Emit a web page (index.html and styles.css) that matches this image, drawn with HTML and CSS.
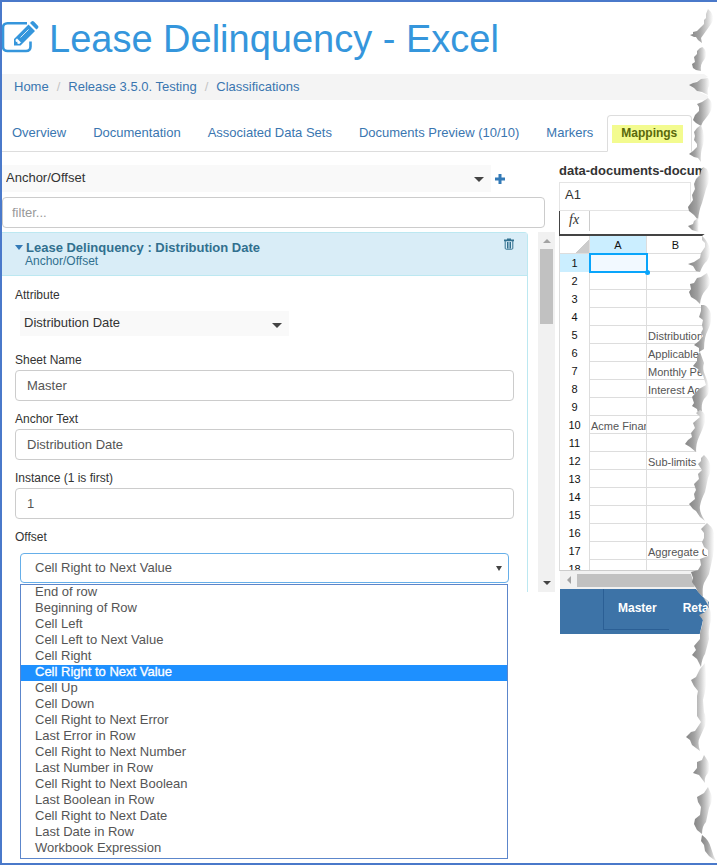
FILE: index.html
```html
<!DOCTYPE html>
<html lang="en">
<head>
<meta charset="utf-8">
<meta name="viewport" content="width=device-width, initial-scale=1">
<title>Lease Delinquency - Excel</title>
<link rel="stylesheet" href="styles.css">
</head>
<body>
<div class="page">
  <h1 class="title">
    <svg class="title-icon" viewBox="0 0 37 32" aria-hidden="true">
      <path d="M25 2.300H5.500Q1 2.300 1 6.800V25.500Q1 30 5.500 30H24Q28.500 30 28.500 25.500V20.500" fill="none" stroke="currentColor" stroke-width="2.600"/>
      <path d="M12 18 26.500 3.500l6.500 6.500L18.500 24.500H12zM28 2l1.500-1.500q1.300-.9 2.600.3l3.800 4q1 1.200 0 2.400L34.400 8.600z" fill="currentColor"/>
      <path d="M14 18.800v1.600h1.800v2h1.700l1-1-3.500-3.600zM18.500 16.500l8-8" fill="#fff" stroke="#fff" stroke-width=".8"/>
    </svg>
    <span>Lease Delinquency - Excel</span>
  </h1>

  <nav class="breadcrumb" aria-label="Breadcrumb">
    <a href="#">Home</a><span class="slash">/</span><a href="#">Release 3.5.0. Testing</a><span class="slash">/</span><a href="#">Classifications</a>
  </nav>

  <nav class="tabs" aria-label="Sections">
    <a href="#">Overview</a>
    <a href="#">Documentation</a>
    <a href="#">Associated Data Sets</a>
    <a href="#">Documents Preview (10/10)</a>
    <a href="#">Markers</a>
    <a href="#" class="active" aria-current="page"><mark>Mappings</mark></a>
  </nav>

  <main class="columns">
    <section class="left">
      <div class="add-row">
        <div class="flat-select">
          <select aria-label="Mapping type"><option>Anchor/Offset</option></select>
        </div>
        <button class="add" type="button" aria-label="Add mapping">
          <svg viewBox="0 0 10 10"><path d="M3.500 0h3v3.500H10v3H6.500V10h-3V6.500H0v-3h3.500z" fill="currentColor"/></svg>
        </button>
      </div>
      <input class="control filter" type="text" placeholder="filter..." aria-label="Filter mappings">

      <div class="list">
        <article class="panel">
          <header class="panel-head">
            <div>
              <h2><span class="caret"></span>Lease Delinquency : Distribution Date</h2>
              <p>Anchor/Offset</p>
            </div>
            <button class="trash" type="button" aria-label="Delete mapping">
              <svg viewBox="0 0 10 12"><path d="M0 1.500h3V.5h4v1h3v1.700H0z" fill="currentColor"/><path d="M1.200 3v7.200q0 1 1 1h5.600q1 0 1-1V3M3.500 4v6.500M5 4v6.500M6.500 4v6.500" fill="none" stroke="currentColor"/></svg>
            </button>
          </header>
          <form class="fields">
            <label for="attribute">Attribute</label>
            <div class="flat-select attribute">
              <select id="attribute"><option>Distribution Date</option></select>
            </div>
            <label for="sheet">Sheet Name</label>
            <input class="control" id="sheet" type="text" value="Master">
            <label for="anchor">Anchor Text</label>
            <input class="control" id="anchor" type="text" value="Distribution Date">
            <label for="instance">Instance (1 is first)</label>
            <input class="control" id="instance" type="text" value="1">
            <label for="offset">Offset</label>
            <div class="offset">
              <select class="control" id="offset"><option>Cell Right to Next Value</option></select>
              <ul class="menu" role="listbox" aria-label="Offset">
                <li role="option">End of row</li>
                <li role="option">Beginning of Row</li>
                <li role="option">Cell Left</li>
                <li role="option">Cell Left to Next Value</li>
                <li role="option">Cell Right</li>
                <li role="option" aria-selected="true" class="selected">Cell Right to Next Value</li>
                <li role="option">Cell Up</li>
                <li role="option">Cell Down</li>
                <li role="option">Cell Right to Next Error</li>
                <li role="option">Last Error in Row</li>
                <li role="option">Cell Right to Next Number</li>
                <li role="option">Last Number in Row</li>
                <li role="option">Cell Right to Next Boolean</li>
                <li role="option">Last Boolean in Row</li>
                <li role="option">Cell Right to Next Date</li>
                <li role="option">Last Date in Row</li>
                <li role="option">Workbook Expression</li>
              </ul>
            </div>
          </form>
        </article>
        <div class="vbar" aria-hidden="true"><i class="up"></i><i class="thumb"></i><i class="down"></i></div>
      </div>
    </section>

    <section class="right">
      <h3>data-documents-docum</h3>
      <div class="cell-name">A1</div>
      <div class="formula"><span class="fx">fx</span></div>
      <div class="grid">
        <table>
          <colgroup><col class="c-num"><col class="c-a"><col></colgroup>
          <thead><tr><th class="corner"></th><th class="on" scope="col">A</th><th class="b" scope="col">B</th></tr></thead>
          <tbody>
            <tr><th class="on">1</th><td class="cursor"></td><td></td></tr>
            <tr><th>2</th><td></td><td></td></tr>
            <tr><th>3</th><td></td><td></td></tr>
            <tr><th>4</th><td></td><td></td></tr>
            <tr><th>5</th><td></td><td>Distribution</td></tr>
            <tr><th>6</th><td></td><td>Applicable R</td></tr>
            <tr><th>7</th><td></td><td>Monthly Pe</td></tr>
            <tr><th>8</th><td></td><td>Interest Acc</td></tr>
            <tr><th>9</th><td></td><td></td></tr>
            <tr><th>10</th><td>Acme Financ</td><td></td></tr>
            <tr><th>11</th><td></td><td></td></tr>
            <tr><th>12</th><td></td><td>Sub-limits</td></tr>
            <tr><th>13</th><td></td><td></td></tr>
            <tr><th>14</th><td></td><td></td></tr>
            <tr><th>15</th><td></td><td></td></tr>
            <tr><th>16</th><td></td><td></td></tr>
            <tr><th>17</th><td></td><td>Aggregate C</td></tr>
            <tr><th>18</th><td></td><td></td></tr>
          </tbody>
        </table>
      </div>
      <div class="hbar" aria-hidden="true"><i class="prev"></i><i class="thumb"></i></div>
      <div class="sheets"><button type="button" class="current">Master</button><button type="button">Reta</button></div>
    </section>
  </main>

  <svg class="torn" viewBox="677 0 40 865" aria-hidden="true">
    <defs>
      <linearGradient id="shade"><stop offset="0" stop-color="#858585"/><stop offset=".4" stop-color="#a2a2a2"/><stop offset=".75" stop-color="#d4d4d4"/><stop offset="1" stop-color="#fff"/></linearGradient>
    </defs>
    <path fill="#fff" d="M697 0H717V862H715L707 855 702 845 704 835 701 833 694 822 701 807 697 798 708 787 704 783 694 773 697 763 704 755 700 753 686 737 693 733 702 722 697 717V700L691 681 705 663 700 667 693 655 700 633 703 620 701 616 709 612 709 602 703 597 695 588 691 574 700 569V560L707 556 703 548 705 540 701 530 706 525 703 520 689 508 695 490V480L702 470 698 463 703 455 697 452 685 444 692 435 693 425 700 417 695 412 699 411 692 405V397L705 388 704 372 699 367 698 360 702 352 700 345 701 340 702 333 703 325 702 317 703 308 700 303 690 297V285L707 273 700 272 688 264 698 259 706 248 702 236 706 233 699 232 688 226 698 218 688 209 695 190 697 182 703 180V164L701 162 689 155 697 146 694 140V132L701 126 693 120 699 110 697 104 708 98 708 96 697 91 689 85 699 80 708 77 700 71 692 67 694 56 697 50 704 47 702 43 690 35 697 31 704 24 706 14 708 9 697 2z"/>
    <g fill="url(#shade)">
      <path d="M708 9l-2 5v4l-2 2v4l-3 3-4 4-4 1v2l-3 1 4 2h2l2 3 4 3-1-5 5-7 5-7q3-4 2-8t-5-7z"/>
      <path d="M704 47l-4 1-3 3v3l-3 3 1 5-3 2 1 4 3 2 5 1q-1-7 3-11 3-4 2-8t-5-5z"/>
      <path d="M708 78l-7 1-4 3-4 1-4 2 5 3 3 3 5 1 6 3q-1-6 1-9t-1-8z"/>
      <path d="M708 98l-6 4-5 2 2 3v4l-4 4-2 5 3 3 5 3q2-5 5-8 5-6 6-11t-4-9z"/>
      <path d="M701 125l-4 3-3 4 1 4-1 4 3 4v3l-4 4-4 3 5 3 4 1 3 4q-1-9 2-17t-2-20z"/>
      <path d="M703 167l-2 4-1 4-4 4-2 5 1 5-3 6 1 5-5 7 1 4 5 4 4 5q1-10 4-17l4-14q6-12 1-20z"/>
      <path d="M698 218l-4 3-1 3-5 2 4 4 7 2q-1-5 0-8z"/>
      <path d="M702 236v4l3 3v4l-4 6-1 5-6 4-6 2 5 2 3 5 4 1q3-8 7-11 5-8 2-15t-7-10z"/>
      <path d="M707 273l-6 4-4 1-3 5-4 1 1 5-2 3 2 5 5 3 4 4q1-9 5-13 6-6 5-11z"/>
      <path d="M701 305v6l-2 6 4 3-1 5 1 4-2 4 2 3-4 5-5 4 5 3v4l5-3q0-12 4-19 6-12 2-19t-7-6z"/>
      <path d="M700 352l-3 4v5l-4 5 5 3 2 4 3 2 3 10-7 4-7 8 2 6-2 3 5 3 1 4 4-2q-1-7 2-12 6-5 5-11-1-7-4-13t-1-12z"/>
      <path d="M700 410l-4 3 4 4-7 6 2 5-4 5 1 4-4 3-3 4 5 3 6 5q0-9 3-15t6-15q2-9-5-12z"/>
      <path d="M704 455l-3 3v3l-3 3 4 6-4 4 1 5-5 5 2 6-2 4 1 5-6 5 4 5 3 2 4 6 5 4q-6-9-5-15t5-14l3-14q7-13-4-23z"/>
      <path d="M707 523l-6 6 3 4v5l-2 4 2 5 4 3v6l-8 3 1 6-3 5-7 2 2 6-1 4 4 6 2 4 5 5q-1-9 1-14l5-9q2-9 4-18t1-18q2-8-7-15z"/>
      <path d="M703 597l5 4 1 6-4 5-6 3 4 5-1 6-2 7v6l-6 7 2 4-4 5 5 4 4 8q1-9 4-13l4-15q-1-10 2-18t-8-24z"/>
      <path d="M705 663l-5 6-4 8-5 3 3 6 4 5-1 5v20l4 6-6 9-4 1-5 5 4 3 2 5 8 6q-3-9 0-14l5-11q2-8-1-14l-1-12q2-7 3-14t-1-23z"/>
      <path d="M704 755l-2 5-5 2v6l-4 5 6 2 6 8q-1-6 3-10 3-6 0-12z"/>
      <path d="M708 787l-4 6-7 4 1 5 3 5-1 8-5 4-1 5 3 6 5 4q0-8 4-12l3-14q4-8 3-12z"/>
      <path d="M702 835l-1 6 3 4 1 6 4 5 8 6q-4-6-6-14t-9-13z"/>
    </g>
  </svg>
</div>
</body>
</html>
```
FILE: styles.css
```css
* { box-sizing: border-box; }
body {
  margin: 0;
  background: #fff;
  color: #333;
  font: 13px/16px "Liberation Sans", Arial, sans-serif;
}
a { color: #3a76b0; text-decoration: none; }
h1, h2, h3, p, ul { margin: 0; padding: 0; }
button { border: 0; padding: 0; background: none; font: inherit; }
input, select { font: inherit; color: #555; }

.page {
  position: relative;
  min-height: 100vh;
  overflow: hidden;
  border: solid #4a79ca;
  border-width: 2px 0 2px 2px;
}
.title {
  display: flex;
  align-items: center;
  gap: 10px;
  height: 72px;
  padding-top: 2px;
  color: #3596dc;
  font-size: 38px;
  line-height: 44px;
  font-weight: 400;
  white-space: nowrap;
}
.title-icon { width: 37px; height: 32px; margin-top: -4px; flex: none; }

.breadcrumb { padding: 5px 12px; background: #f4f4f4; }
.slash { padding: 0 8px; color: #c4c4c4; }

.tabs {
  display: flex;
  align-items: flex-end;
  gap: 1px;
  height: 52px;
  border-bottom: 1px solid #ddd;
  white-space: nowrap;
}
.tabs a { padding: 10px 13px; }
.tabs a:first-child { padding-left: 10px; }
.tabs .active {
  margin-bottom: -1px;
  padding: 9px 8px 8px 4px;
  border: 1px solid #ddd;
  border-bottom-color: #fff;
  border-radius: 4px 4px 0 0;
  background: #fff;
}
mark { display: block; padding: 0 6px 2px 9px; background: #f3fb8f; color: #59690c; font-size: 12px; font-weight: 700; }

.columns { display: grid; grid-template-columns: minmax(0, 7fr) minmax(0, 2fr); gap: 4px; padding-top: 13px; }
.add-row { display: flex; align-items: center; gap: 4px; margin-right: 50px; }
.flat-select { position: relative; flex: 1; background: #f9f9f9; }
.flat-select::after {
  content: "";
  position: absolute;
  right: 7px;
  top: 12px;
  border: 5px solid transparent;
  border-top-color: #444;
  border-bottom: 0;
  pointer-events: none;
}
.flat-select select {
  appearance: none;
  display: block;
  width: 100%;
  height: 27px;
  padding: 0 4px 2px;
  border: 0;
  background: none;
  color: #333;
}
.add { width: 10px; height: 10px; color: #337ab7; }
.add svg, .trash svg { display: block; width: 10px; }
.control {
  display: block;
  width: 100%;
  height: 31px;
  padding: 0 11px;
  border: 1px solid #ccc;
  border-radius: 4px;
  background: #fff;
}
.filter { width: auto; min-width: calc(100% - 10px); margin: 5px 0 4px; padding: 0 9px; }
.filter::placeholder { color: #999; }

.list { display: flex; gap: 10px; }
.panel { flex: 1; min-width: 0; border: 1px solid #bce8f1; border-width: 1px 1px 0 0; border-radius: 0 4px 0 0; }
.panel-head {
  display: flex;
  justify-content: space-between;
  height: 43px;
  padding: 7px 13px;
  border-bottom: 1px solid #bce8f1;
  background: #d9edf7;
  color: #31708f;
}
.panel-head h2 { font-size: 13px; line-height: 15px; }
.panel-head p { padding-left: 10px; font-size: 12px; line-height: 12px; }
.caret { display: inline-block; margin-right: 3px; border: 4px solid transparent; border-top: 5px solid #337ab7; border-bottom: 0; vertical-align: 2px; }
.trash { width: 10px; height: 12px; margin-top: -2px; margin-right: 0; color: #31708f; }
.fields { padding: 11px 13px 9px; }
.fields label { display: block; margin-bottom: 2px; font-size: 12px; line-height: 16px; }
.fields .control { margin-bottom: 10px; }
.fields .attribute { width: 54%; margin: 8px 5px 16px; }
.attribute select { height: 25px; }
.fields .offset { position: relative; margin: 8px 5px 0; }
.fields .offset .control { appearance: none; height: 30px; margin: 0; padding: 0 14px; border-color: #66afe9; }
.offset::after {
  content: "";
  position: absolute;
  right: 7px;
  top: 13px;
  border: 3px solid transparent;
  border-top: 5px solid #444;
  border-bottom: 0;
}
.menu {
  position: absolute;
  top: 31px;
  left: 0;
  right: 1px;
  z-index: 2;
  border: 1px solid #5c86cb;
  background: #fff;
  color: #555;
  list-style: none;
}
.menu li { height: 16px; padding-left: 14px; line-height: 14px; }
.menu li:last-child { height: 17px; }
.menu .selected { background: #1e90ff; color: #fff; -webkit-text-stroke: 0.3px #fff; }

.vbar { display: flex; flex-direction: column; align-items: center; width: 17px; padding: 7px 0; background: #f1f1f1; }
.up, .down { border: 4px solid transparent; }
.up { border-top: 0; border-bottom-color: #a3a3a3; }
.down { margin-top: auto; border-bottom: 0; border-top-color: #444; }
.vbar .thumb { width: 13px; height: 75px; margin-top: 6px; background: #c1c1c1; }

.right h3 { overflow: hidden; margin-top: -3px; padding-bottom: 3px; color: #333; font-size: 13px; line-height: 17px; white-space: nowrap; }
.cell-name { height: 29px; margin-right: 26px; padding: 4px 5px; border: 1px solid #e4e4e4; }
.formula { height: 25px; border: solid #444; border-width: 0 0 2px 1px; }
.fx {
  display: block;
  width: 30px;
  height: 20px;
  padding-left: 9px;
  border-right: 1px solid #ccc;
  font: italic 14px/17px "Liberation Serif", serif;
}
.grid { height: 335px; overflow: hidden; border-bottom: 1px solid #ccc; border-left: 1px solid #ddd; }
table { width: 100%; table-layout: fixed; border-collapse: separate; border-spacing: 0; }
.c-num { width: 30px; }
.c-a { width: 57px; }
th, td {
  height: 18px;
  padding: 0;
  border: solid #ddd;
  border-width: 0 1px 1px 0;
  overflow: hidden;
  white-space: nowrap;
  font-size: 11px;
  line-height: 16px;
}
th { color: #111; font-weight: 400; }
tbody th { border-bottom: 0; line-height: 17px; }
thead .b { padding-right: 12px; }
td { padding: 3px 0 0 1px; line-height: 14px; color: #555; }
.on { background: #cbeeff; }
.corner { background: linear-gradient(135deg, #fff 70%, #ccc 70%); }
.cursor { position: relative; background: #f2f9ff; outline: 2px solid #09a5fb; outline-offset: -1px; overflow: visible; }
.cursor::after { content: ""; position: absolute; right: -4px; bottom: -4px; width: 5px; height: 5px; border-radius: 50%; background: #09a5fb; }
.hbar { display: flex; align-items: center; gap: 6px; height: 18px; margin-left: 1px; padding-left: 7px; background: #f1f1f1; }
.prev { border: 4px solid transparent; border-left: 0; border-right-color: #a3a3a3; }
.hbar .thumb { flex: 1; height: 13px; background: #c1c1c1; }
.sheets { display: flex; height: 45px; margin-left: 1px; padding: 0 0 4px 43px; background: #3d73a7; }
.sheets button { padding: 2px 14px 6px; color: #fff; font-size: 12px; font-weight: 700; }
.sheets .current { border: solid #2b5f95; border-width: 0 0 1px 1px; padding: 2px 12px 5px 14px; }

.torn { position: absolute; top: -2px; right: 0; width: 40px; height: 865px; z-index: 3; pointer-events: none; }
```
